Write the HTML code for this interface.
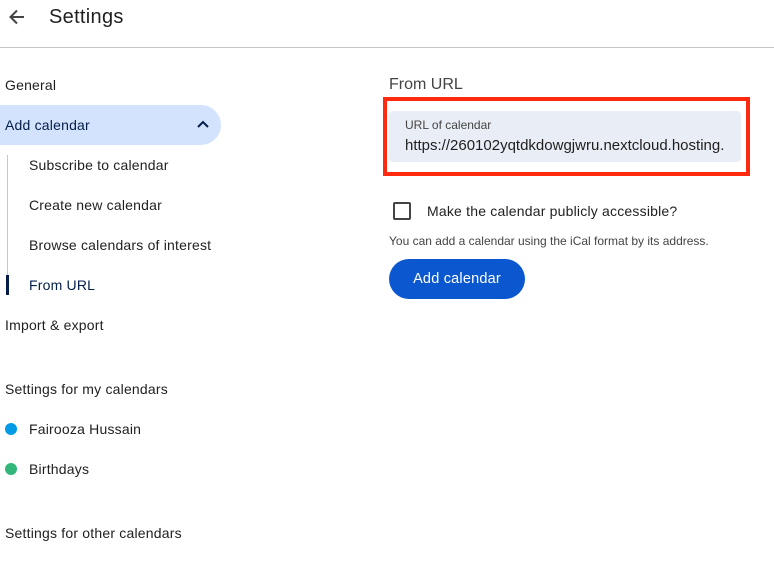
<!DOCTYPE html>
<html><head><style>
body{margin:0;width:774px;height:564px;background:#fff;font-family:"Liberation Sans",sans-serif;color:#1f1f1f;position:relative;overflow:hidden}
.a{position:absolute;white-space:nowrap}
.n{font-size:14px;color:#1f1f1f;letter-spacing:0.2px}
</style></head><body>
<svg class="a" style="left:7px;top:7px" width="20" height="20" viewBox="0 0 20 20"><path d="M17 10H4M10 3.5L3.5 10L10 16.5" stroke="#444" stroke-width="2" fill="none"/></svg>
<div class="a" style="left:49px;top:6px;font-size:20px;color:#1f1f1f;letter-spacing:0.3px">Settings</div>
<div class="a" style="left:0;top:47px;width:774px;height:1px;background:#c4c7c5"></div>

<div class="a n" style="left:5px;top:77px">General</div>
<div class="a" style="left:0;top:105px;width:221px;height:40px;background:#d3e3fd;border-radius:0 20px 20px 0"></div>
<div class="a n" style="left:5px;top:117px;color:#041e49">Add calendar</div>
<svg class="a" style="left:196px;top:119px" width="14" height="10" viewBox="0 0 14 10"><path d="M2 8L7 3L12 8" stroke="#041e49" stroke-width="2" fill="none"/></svg>
<div class="a" style="left:7px;top:155px;width:1px;height:140px;background:#c4c7c5"></div>
<div class="a" style="left:6px;top:275px;width:3px;height:20px;background:#041e49"></div>
<div class="a n" style="left:29px;top:157px">Subscribe to calendar</div>
<div class="a n" style="left:29px;top:197px">Create new calendar</div>
<div class="a n" style="left:29px;top:237px">Browse calendars of interest</div>
<div class="a n" style="left:29px;top:277px;color:#041e49">From URL</div>
<div class="a n" style="left:5px;top:317px">Import &amp; export</div>
<div class="a n" style="left:5px;top:381px;font-weight:500">Settings for my calendars</div>
<div class="a" style="left:5px;top:423px;width:12px;height:12px;border-radius:50%;background:#039be5"></div>
<div class="a n" style="left:29px;top:421px">Fairooza Hussain</div>
<div class="a" style="left:5px;top:463px;width:12px;height:12px;border-radius:50%;background:#33b679"></div>
<div class="a n" style="left:29px;top:461px">Birthdays</div>
<div class="a n" style="left:5px;top:525px">Settings for other calendars</div>

<div class="a" style="left:389px;top:76px;font-size:16px;color:#444">From URL</div>
<div class="a" style="left:383px;top:97px;width:359px;height:71px;border:4px solid #ff2a0f"></div>
<div class="a" style="left:389px;top:111px;width:352px;height:51px;background:#e9edf5;border-radius:4px;overflow:hidden">
<div class="a" style="left:16px;top:7px;font-size:12px;color:#444">URL of calendar</div>
<div class="a" style="left:16px;top:26px;width:320px;overflow:hidden;font-size:15px;color:#1f1f1f">https://260102yqtdkdowgjwru.nextcloud.hosting.zo</div>
</div>
<div class="a" style="left:393px;top:202px;width:14px;height:14px;border:2px solid #444;border-radius:2px"></div>
<div class="a" style="left:427px;top:203px;font-size:14px;letter-spacing:0.2px">Make the calendar publicly accessible?</div>
<div class="a" style="left:389px;top:234px;font-size:12px;color:#444">You can add a calendar using the iCal format by its address.</div>
<div class="a" style="left:389px;top:259px;width:136px;height:40px;border-radius:20px;background:#0b57d0;color:#fff;font-size:14.5px;text-align:center;line-height:40px;letter-spacing:0.2px">Add calendar</div>
</body></html>
